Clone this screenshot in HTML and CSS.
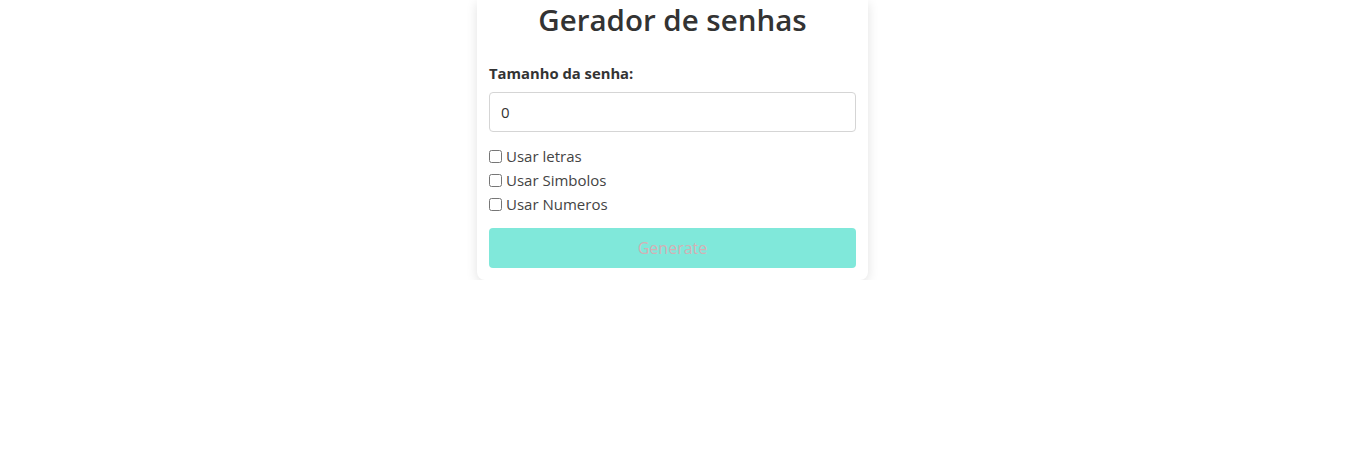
FILE: index.html
```html
<!DOCTYPE html>
<html lang="pt">
<head>
<meta charset="utf-8">
<title>Gerador de senhas</title>
<link rel="stylesheet" href="styles.css">
</head>
<body>
<main class="card">
  <h1 class="title">Gerador de senhas</h1>
  <label class="field-label" for="len">Tamanho da senha:</label>
  <input class="field-input" id="len" type="number" value="0">
  <div class="options">
    <label class="option"><input type="checkbox" class="check"> Usar letras</label>
    <label class="option"><input type="checkbox" class="check"> Usar Simbolos</label>
    <label class="option"><input type="checkbox" class="check"> Usar Numeros</label>
  </div>
  <button class="btn" disabled>Generate</button>
</main>
</body>
</html>
```
FILE: styles.css
```css
html, body {
  margin: 0;
  padding: 0;
  background: #fff;
}
body {
  font-family: "Open Sans", "Noto Sans", sans-serif;
  color: #333;
  display: flex;
  justify-content: center;
}
.card {
  width: 391px;
  box-sizing: border-box;
  padding: 0 12px 12px;
  background: #fff;
  border-radius: 0 0 8px 8px;
  box-shadow: 0 3px 12px rgba(0, 0, 0, 0.12);
  display: flex;
  flex-direction: column;
}
.title {
  margin: 0;
  font-size: 29.5px;
  font-weight: 600;
  line-height: 40px;
  text-align: center;
  color: #333;
}
.field-label {
  margin-top: 21px;
  font-size: 14.8px;
  font-weight: 700;
  line-height: 24px;
}
.field-input {
  margin-top: 7px;
  height: 40px;
  box-sizing: border-box;
  border: 1px solid #d5d5d5;
  border-radius: 4px;
  padding: 0 11px;
  font-family: inherit;
  font-size: 15px;
  color: #333;
  -moz-appearance: textfield;
}
.field-input::-webkit-inner-spin-button,
.field-input::-webkit-outer-spin-button {
  -webkit-appearance: none;
  margin: 0;
}
.options {
  margin-top: 12px;
  display: flex;
  flex-direction: column;
}
.option {
  display: flex;
  align-items: center;
  gap: 4px;
  font-size: 15px;
  line-height: 24px;
  color: #444;
}
.check {
  margin: 0;
  width: 13px;
  height: 13px;
}
.btn {
  margin-top: 12px;
  height: 40px;
  border: none;
  border-radius: 4px;
  background: #80e8da;
  color: #d4b0b5;
  font-family: inherit;
  font-size: 16px;
}
```
